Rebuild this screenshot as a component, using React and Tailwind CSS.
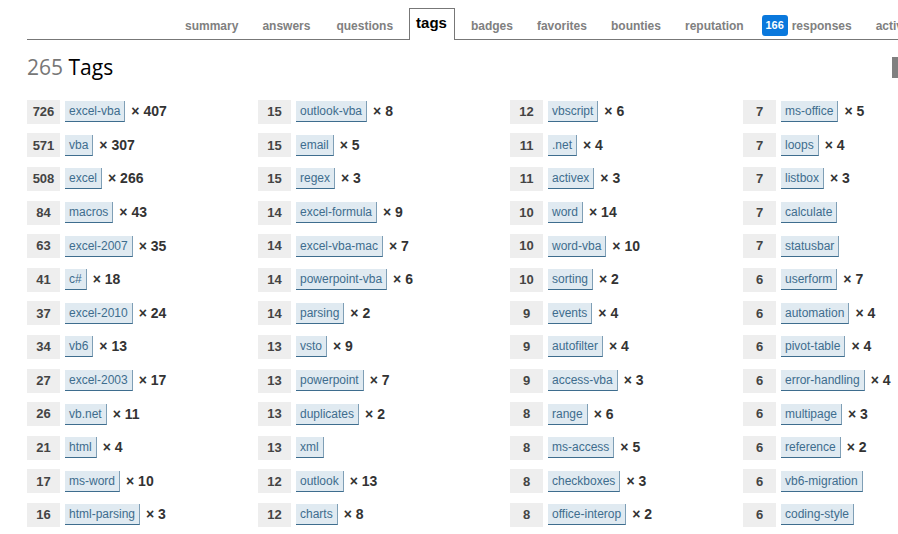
import React from "react";

const cols = [
  [
    ["726", "excel-vba", "407"],
    ["571", "vba", "307"],
    ["508", "excel", "266"],
    ["84", "macros", "43"],
    ["63", "excel-2007", "35"],
    ["41", "c#", "18"],
    ["37", "excel-2010", "24"],
    ["34", "vb6", "13"],
    ["27", "excel-2003", "17"],
    ["26", "vb.net", "11"],
    ["21", "html", "4"],
    ["17", "ms-word", "10"],
    ["16", "html-parsing", "3"],
  ],
  [
    ["15", "outlook-vba", "8"],
    ["15", "email", "5"],
    ["15", "regex", "3"],
    ["14", "excel-formula", "9"],
    ["14", "excel-vba-mac", "7"],
    ["14", "powerpoint-vba", "6"],
    ["14", "parsing", "2"],
    ["13", "vsto", "9"],
    ["13", "powerpoint", "7"],
    ["13", "duplicates", "2"],
    ["13", "xml", null],
    ["12", "outlook", "13"],
    ["12", "charts", "8"],
  ],
  [
    ["12", "vbscript", "6"],
    ["11", ".net", "4"],
    ["11", "activex", "3"],
    ["10", "word", "14"],
    ["10", "word-vba", "10"],
    ["10", "sorting", "2"],
    ["9", "events", "4"],
    ["9", "autofilter", "4"],
    ["9", "access-vba", "3"],
    ["8", "range", "6"],
    ["8", "ms-access", "5"],
    ["8", "checkboxes", "3"],
    ["8", "office-interop", "2"],
  ],
  [
    ["7", "ms-office", "5"],
    ["7", "loops", "4"],
    ["7", "listbox", "3"],
    ["7", "calculate", null],
    ["7", "statusbar", null],
    ["6", "userform", "7"],
    ["6", "automation", "4"],
    ["6", "pivot-table", "4"],
    ["6", "error-handling", "4"],
    ["6", "multipage", "3"],
    ["6", "reference", "2"],
    ["6", "vb6-migration", null],
    ["6", "coding-style", null],
  ],
];

const colWidths = ["w-[231px]", "w-[252px]", "w-[233px]", "w-[160px]"];

function Tab({ children, className = "" }) {
  return (
    <div className={"h-[31px] pt-[4px] flex items-center px-3 text-[12px] font-bold text-[#808080] " + className}>
      {children}
    </div>
  );
}

function Row({ count, tag, mult }) {
  return (
    <div className="h-[33.6px] flex items-center">
      <div className="w-[33px] h-[24px] bg-[#eeeeee] text-[#444] font-bold text-[13px] flex items-center justify-center">
        {count}
      </div>
      <span className="ml-[5px] bg-[#e0eaf1] text-[#3e6d8e] text-[12px] leading-[14px] px-[4px] pt-[3px] pb-[3px] border-r border-b border-r-[#7f9fb6] border-b-[#3e6d8e] whitespace-nowrap">
        {tag}
      </span>
      {mult && (
        <span className="ml-[6px] text-[14px] font-bold text-[#333] whitespace-nowrap">× {mult}</span>
      )}
    </div>
  );
}

export default function App() {
  return (
    <div
      className="w-[898px] h-[534px] overflow-hidden bg-white pl-[27px]"
      style={{ fontFamily: '"Liberation Sans", Arial, sans-serif' }}
    >
      <div className="h-[40px] border-b border-[#777] flex items-end whitespace-nowrap">
        <div className="flex items-end ml-[146px]">
          <Tab>summary</Tab>
          <Tab>answers</Tab>
          <Tab className="ml-[2px]">questions</Tab>
          <div className="ml-[4px] h-[32px] mb-[-1px] bg-white border border-b-0 border-[#777] flex items-center pl-[6px] pr-[7px] pb-[2px] text-[15px] font-bold text-black">
            tags
          </div>
          <Tab className="ml-[4px]">badges</Tab>
          <Tab>favorites</Tab>
          <Tab>bounties</Tab>
          <Tab>reputation</Tab>
          <Tab className="pl-[6px]">
            <span className="h-[21px] w-[26px] rounded-[3px] bg-[#0a78dc] text-white text-[11px] font-bold flex items-center justify-center mr-[4px]">
              166
            </span>
            responses
          </Tab>
          <Tab>activity</Tab>
        </div>
      </div>

      <div className="mt-[13px] h-[28px] flex items-center">
        <h1
          className="text-[21px] leading-[28px] font-normal"
          style={{ fontFamily: '"Open Sans", sans-serif' }}
        >
          <span className="text-[#777]">265</span> <span className="text-black">Tags</span>
        </h1>
        <div className="ml-auto w-[6px] h-[21px] bg-[#808080]"></div>
      </div>

      <div className="mt-[14px] flex">
        {cols.map((col, i) => (
          <div key={i} className={"flex flex-col shrink-0 " + colWidths[i]}>
            {col.map((r, j) => (
              <Row key={j} count={r[0]} tag={r[1]} mult={r[2]} />
            ))}
          </div>
        ))}
      </div>
    </div>
  );
}
